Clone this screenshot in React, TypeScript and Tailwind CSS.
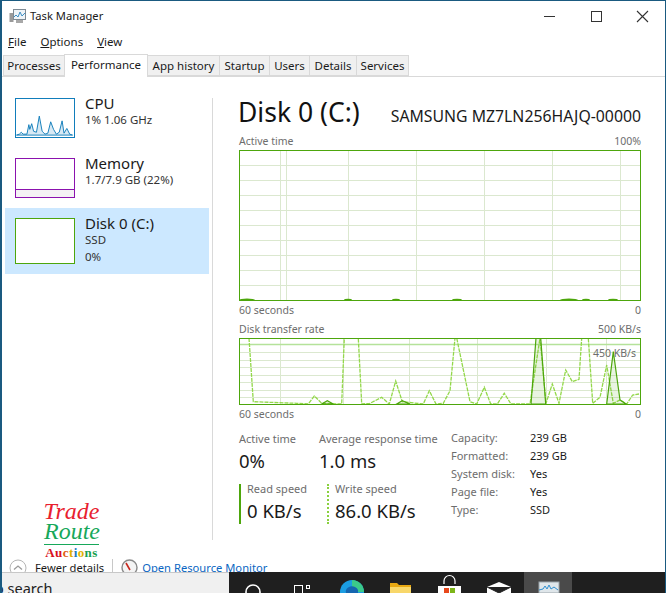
import React from "react";

const WRITE_SPEED =
  "249,338 253.3,401.7 296.7,403.3 308.3,404 314.3,396 321.7,403.3 341.7,404 344.3,338 358.3,338 361.7,404 370,403.3 381.7,397.3 389.3,404 395.7,381 402.3,401.7 423.3,404 429.3,390.7 436,404 443.3,403.3 450,390.7 455,338 456.7,338 470,401.7 476.7,404 484.3,387.3 490.7,404 497.3,404 504.3,393.3 511,404 530,404 540,338 546,403.3 552.3,384 559,403.3 565.7,370 572.3,381.7 579,379.3 581.7,338 588.3,338 592.7,403.3 600,397.3 606.7,365 613.3,403.3 620,400 626.7,404 632.7,395 639,394";

const READ_SPEED = [
  "531,404 536,338 540.7,338 545.7,404",
  "606.7,404 613.3,351.7 620,400 626,404",
  "321.7,404 327.3,400.7 333.3,404",
  "396.7,404 402.3,400.7 410,404",
];

const DISK_STATS = [
  ["Capacity:", "239 GB"],
  ["Formatted:", "239 GB"],
  ["System disk:", "Yes"],
  ["Page file:", "Yes"],
  ["Type:", "SSD"],
];

const TABS = [
  { label: "Processes", w: "w-[62px]" },
  { label: "Performance", w: "w-[84px]", active: true },
  { label: "App history", w: "w-[73px]" },
  { label: "Startup", w: "w-[51px]" },
  { label: "Users", w: "w-[41px]" },
  { label: "Details", w: "w-[48px]" },
  { label: "Services", w: "w-[53px]" },
];

function TaskManagerIcon({ size = 17 }: { size?: number }) {
  return (
    <svg width={size} height={size} viewBox="0 0 17 17">
      <rect x="0.5" y="5" width="4" height="9" fill="#9a9a9a" />
      <rect x="4.5" y="1.5" width="12" height="10" fill="#eef3f7" stroke="#7d8a94" />
      <polyline points="5,9 7,7 9,9 11,4 13,8 16,5" fill="none" stroke="#3b8ec4" strokeWidth="1" />
      <rect x="7" y="12" width="7" height="3" fill="#a8a8a8" />
    </svg>
  );
}

function SideItem({
  title,
  lines,
  active,
  children,
}: {
  title: string;
  lines: string[];
  active?: boolean;
  children: React.ReactNode;
}) {
  return (
    <div className={`flex gap-[10px] ml-[3px] w-[204px] pl-[10px] pt-[10px] ${active ? "bg-[#cce8ff] h-[66px]" : "h-[60px]"}`}>
      {children}
      <div className="flex flex-col">
        <span className="text-[15px] leading-[15px] text-[#1a1a1a] mt-[-2px]">{title}</span>
        {lines.map((l) => (
          <span key={l} className="text-[11.5px] leading-[16px] text-[#333] mt-[1px] first:mt-[3px] whitespace-nowrap">
            {l}
          </span>
        ))}
      </div>
    </div>
  );
}

function Stat({ label, value, valueClass = "mt-0" }: { label: string; value: string; valueClass?: string }) {
  return (
    <div>
      <div className="text-[11px] leading-[16px] text-[#6d6d6d] whitespace-nowrap">{label}</div>
      <div className={`text-[18.5px] leading-[24px] text-[#1a1a1a] whitespace-nowrap ${valueClass}`}>{value}</div>
    </div>
  );
}

export default function App() {
  return (
    <div
      className="w-[666px] h-[593px] overflow-hidden bg-white flex flex-col border-t border-t-[#1a5a80] border-l-2 border-l-[#1a5a80] border-r border-r-[#1a5a80]"
      style={{ fontFamily: '"Noto Sans", sans-serif' }}
    >
      {/* title bar */}
      <div className="h-[30px] flex items-center shrink-0 pl-[7px]">
        <TaskManagerIcon />
        <span className="ml-[4px] text-[11.2px] text-[#1a1a1a]">Task Manager</span>
        <svg width="110" height="14" viewBox="0 0 110 14" className="ml-auto mr-[13px]">
          <line x1="2" y1="7.5" x2="13" y2="7.5" stroke="#333" />
          <rect x="49.5" y="2.5" width="10" height="10" fill="none" stroke="#333" />
          <path d="M95 2 L106 13 M106 2 L95 13" stroke="#333" strokeWidth="1.1" />
        </svg>
      </div>

      {/* menu */}
      <div className="h-[21px] flex items-center gap-[14px] pl-[6px] text-[11.5px] text-[#1a1a1a] shrink-0">
        <span><u>F</u>ile</span>
        <span><u>O</u>ptions</span>
        <span><u>V</u>iew</span>
      </div>

      {/* tabs */}
      <div className="h-[24px] flex items-end pl-[1px] border-b border-[#d9d9d9] shrink-0 mt-[1px]">
        {TABS.map((t) => (
          <div
            key={t.label}
            className={`${t.w} flex items-center justify-center text-[11.5px] text-[#1a1a1a] border border-[#d9d9d9] ml-[-1px] first:ml-0 ${
              t.active ? "h-[23px] bg-white border-b-0 mb-[-1px] pb-[2px] relative" : "h-[21px] bg-[#f0f0f0]"
            }`}
          >
            {t.label}
          </div>
        ))}
      </div>

      {/* main */}
      <div className="flex-1 flex min-h-0">
        <div className="w-[211px] shrink-0 flex flex-col border-r border-[#d9d9d9] mt-[21px] mb-[15px]">
          <div className="flex flex-col mt-[-10px]">
            <SideItem title="CPU" lines={["1%  1.06 GHz"]}>
              <svg width="60" height="40" className="shrink-0 border border-[#117dbb]" viewBox="0 0 60 40">
                <polygon
                  points="0,38 3,37 5,35 7,37 11,37 13,27 14,32 16,26 18,34 21,35 24,18 27,34 30,37 33,36 36,24 39,32 42,37 45,35 48,23 50,36 53,31 56,37 59,38"
                  fill="#d8e9f4"
                  stroke="#117dbb"
                />
              </svg>
            </SideItem>
            <SideItem title="Memory" lines={["1.7/7.9 GB (22%)"]}>
              <div className="w-[60px] h-[40px] border border-[#8b12ae] shrink-0 flex flex-col justify-end">
                <div className="h-[8px] bg-[#f4f2f4] border-t border-[#8b12ae]" />
              </div>
            </SideItem>
            <SideItem title="Disk 0 (C:)" lines={["SSD", "0%"]} active>
              <div className="w-[60px] h-[46px] border border-[#4da60c] bg-white shrink-0" />
            </SideItem>
          </div>
          <div
            className="mt-auto mb-[-20px] ml-[42px] w-[55px] flex flex-col items-center"
            style={{ fontFamily: '"Liberation Serif", serif' }}
          >
            <span className="italic text-[24px] leading-[20px] text-[#e8202e]">Trade</span>
            <span className="italic text-[24px] leading-[20px] text-[#17a85a] border-b border-[#17a85a] pb-[3px] w-full text-center">Route</span>
            <span className="font-bold text-[13px] leading-[14px] mt-[1px] tracking-[0.4px] whitespace-nowrap">
              <span className="text-[#d8101c]">Au</span>
              <span className="text-[#e05a10]">c</span>
              <span className="text-[#e0b000]">t</span>
              <span className="text-[#1a7ac0]">i</span>
              <span className="text-[#e0b000]">o</span>
              <span className="text-[#18a050]">ns</span>
            </span>
          </div>
        </div>

        <div className="flex-1 min-w-0 pl-[26px] pr-[24px] flex flex-col">
          <div className="flex items-end justify-between h-[38px] mt-[14px]">
            <span className="text-[26.5px] leading-[36px] text-[#111] whitespace-nowrap ml-[-1px] mb-[-1px]">Disk 0 (C:)</span>
            <span className="text-[15.8px] leading-[22px] text-[#1a1a1a] mb-[2px] whitespace-nowrap">SAMSUNG MZ7LN256HAJQ-00000</span>
          </div>

          <div className="flex justify-between text-[10.5px] leading-[14px] text-[#6d6d6d] mt-[5px] h-[16px]">
            <span>Active time</span>
            <span>100%</span>
          </div>
          <svg width="402" height="151" viewBox="239 150 402 151" className="block shrink-0">
            <g stroke="#dbe8cf" fill="none">
              {[165, 180, 195, 210, 225, 240, 255, 270, 285].map((y) => (
                <line key={y} x1="239" x2="641" y1={y + 0.5} y2={y + 0.5} />
              ))}
              {[280, 286, 348, 416, 484, 552, 620].map((x) => (
                <line key={x} y1="150" y2="301" x1={x + 0.5} x2={x + 0.5} />
              ))}
            </g>
            <g fill="#4da60c">
              <ellipse cx="247" cy="300" rx="8" ry="1.5" />
              <ellipse cx="348" cy="300" rx="4" ry="1.2" />
              <ellipse cx="396" cy="300" rx="4" ry="1.2" />
              <ellipse cx="457" cy="300" rx="5" ry="1.2" />
              <ellipse cx="569" cy="300" rx="9" ry="1.5" />
              <ellipse cx="586" cy="300" rx="4" ry="1.2" />
              <ellipse cx="613" cy="300" rx="5" ry="1.2" />
            </g>
            <rect x="239.5" y="150.5" width="401" height="150" fill="none" stroke="#4da60c" />
          </svg>
          <div className="flex justify-between text-[10.5px] leading-[14px] text-[#6d6d6d] mt-[2px]">
            <span>60 seconds</span>
            <span>0</span>
          </div>

          <div className="flex justify-between text-[10.5px] leading-[14px] text-[#6d6d6d] mt-[5px]">
            <span>Disk transfer rate</span>
            <span>500 KB/s</span>
          </div>
          <div className="relative mt-[2px] shrink-0 h-[67px]">
            <svg width="402" height="67" viewBox="239 338 402 67" className="block">
              <g stroke="#dbe8cf" fill="none">
                {[352, 360, 367, 375, 382, 390, 397].map((y) => (
                  <line key={y} x1="239" x2="641" y1={y + 0.5} y2={y + 0.5} />
                ))}
                {[280, 343, 409, 477, 546, 606].map((x) => (
                  <line key={x} y1="338" y2="405" x1={x + 0.5} x2={x + 0.5} />
                ))}
              </g>
              <line x1="239" x2="641" y1="344.5" y2="344.5" stroke="#b5e29a" strokeWidth="1.5" />
              <polyline points={WRITE_SPEED} fill="none" stroke="#93d84a" strokeWidth="1.3" strokeDasharray="4 1" />
              {READ_SPEED.map((p) => (
                <polygon key={p} points={p} fill="#4da60c" fillOpacity="0.12" stroke="#4da60c" strokeWidth="1.2" />
              ))}
              <rect x="239.5" y="338.5" width="401" height="66" fill="none" stroke="#4da60c" />
            </svg>
            <span className="absolute right-[5px] top-[8px] text-[10.5px] leading-[14px] text-[#6d6d6d]">450 KB/s</span>
          </div>
          <div className="flex justify-between text-[10.5px] leading-[14px] text-[#6d6d6d] mt-[2px]">
            <span>60 seconds</span>
            <span>0</span>
          </div>

          <div className="flex mt-[10px]">
            <div className="w-[212px] shrink-0">
              <div className="flex">
                <div className="w-[80px]">
                  <Stat label="Active time" value="0%" valueClass="mt-[2px]" />
                </div>
                <Stat label="Average response time" value="1.0 ms" valueClass="mt-[2px]" />
              </div>
              <div className="flex mt-[11px]">
                <div className="w-[88px] border-l-2 border-[#4da60c] pl-[6px] h-[40px]">
                  <div className="mt-[-3px]">
                    <Stat label="Read speed" value="0 KB/s" valueClass="mt-[2px]" />
                  </div>
                </div>
                <div className="border-l-2 border-dotted border-[#8ad13f] pl-[6px] h-[40px]">
                  <div className="mt-[-3px]">
                    <Stat label="Write speed" value="86.0 KB/s" valueClass="mt-[2px]" />
                  </div>
                </div>
              </div>
            </div>
            <div className="grid grid-cols-[79px_1fr] auto-rows-[18px] text-[11px] leading-[18px] mt-[-2px]">
              {DISK_STATS.map(([k, v]) => (
                <React.Fragment key={k}>
                  <span className="text-[#6d6d6d]">{k}</span>
                  <span className="text-[#1a1a1a]">{v}</span>
                </React.Fragment>
              ))}
            </div>
          </div>
        </div>
      </div>

      {/* footer, clipped by the taskbar */}
      <div className="h-[17px] shrink-0 flex items-start pt-[4px] pl-[7px] overflow-hidden text-[11.2px] leading-[18px]">
        <svg width="18" height="18" viewBox="0 0 18 18" className="shrink-0">
          <circle cx="9" cy="9" r="8" fill="white" stroke="#b5b5b5" />
          <path d="M5 10.5 L9 7 L13 10.5" fill="none" stroke="#9a9a9a" strokeWidth="1.3" />
        </svg>
        <span className="ml-[8px] text-[#1a1a1a] whitespace-nowrap">Fewer details</span>
        <div className="w-px h-[17px] bg-[#c8c8c8] ml-[8px]" />
        <svg width="17" height="17" viewBox="0 0 17 17" className="shrink-0 ml-[8px]">
          <circle cx="8.5" cy="8.5" r="7.5" fill="#f4f4f4" stroke="#8a8a8a" strokeWidth="1.4" />
          <path d="M5 4 L9 11" stroke="#c8281e" strokeWidth="1.6" />
        </svg>
        <span className="ml-[4px] text-[#0a66c2] whitespace-nowrap">Open Resource Monitor</span>
      </div>

      {/* taskbar */}
      <div className="h-[21px] shrink-0 flex bg-[#1f1f1f] ml-[-2px] mr-[-1px] overflow-hidden">
        <div className="w-[229px] bg-[#f0f0f0] border-t border-[#c8c8c8] text-[14.5px] leading-[20px] text-[#222] pt-[5px] whitespace-nowrap overflow-hidden">
          <span className="ml-[-5px]">o search</span>
        </div>
        <svg width="295" height="21" viewBox="229 572 295 21" className="shrink-0">
          <circle cx="253" cy="592" r="7" fill="none" stroke="white" strokeWidth="1.6" />
          <g stroke="white" fill="none">
            <rect x="294.5" y="585.5" width="8" height="8" />
            <rect x="306.5" y="585.5" width="3" height="3" />
          </g>
          <circle cx="352" cy="592" r="12" fill="#1b9de2" />
          <path d="M352 580 A12 12 0 0 1 364 592 L358 592 A6 5 0 0 0 352 587 Z" fill="#3bc98a" />
          <path d="M346 593 A6 5 0 0 1 358 590 L358 593 Z" fill="#1566b0" />
          <path d="M390 583 H397 L399 585 H411 V593 H390 Z" fill="#e8a812" />
          <rect x="390" y="587" width="21" height="6" fill="#f8d76a" />
          <path d="M444 584 V581 A5 5 0 0 1 455 581 V584" fill="none" stroke="white" strokeWidth="1.2" />
          <rect x="438" y="586" width="23" height="7" fill="white" />
          <rect x="444" y="588" width="5" height="5" fill="#e8481c" />
          <rect x="450" y="588" width="5" height="5" fill="#7cb518" />
          <path d="M487 587 L499 582 L511 587 V593 H487 Z" fill="white" />
          <path d="M487 587 L499 593 L511 587" fill="#222" stroke="#222" />
        </svg>
        <div className="w-[48px] h-full bg-[#4a4a4a] flex justify-center pt-[9px]">
          <svg width="24" height="12" viewBox="0 0 24 12">
            <rect x="3" y="1" width="20" height="11" fill="#dfe6ea" stroke="#9aa4aa" />
            <polyline points="3,9 7,8 9,5 11,8 13,4 15,8 18,6 22,9" fill="none" stroke="#2f8fd0" />
          </svg>
        </div>
      </div>
    </div>
  );
}
